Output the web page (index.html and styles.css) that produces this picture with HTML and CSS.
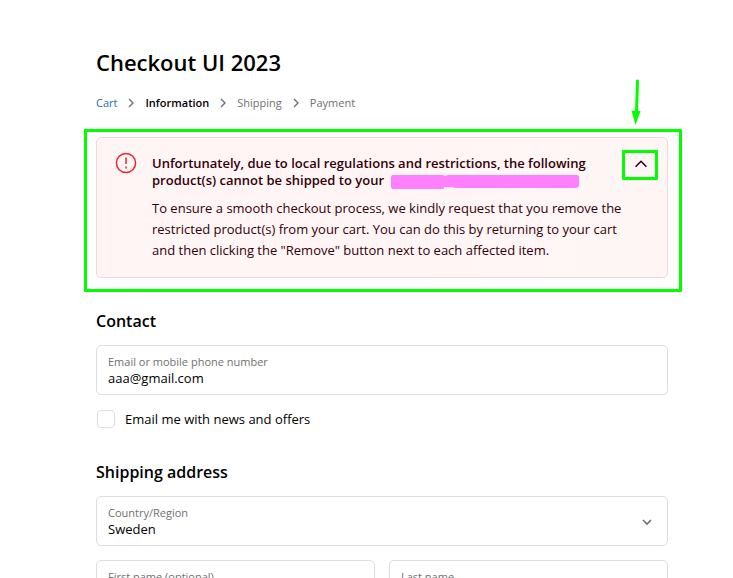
FILE: index.html
```
<!DOCTYPE html>
<html lang="en">
<head>
    <meta charset="UTF-8">
    <meta name="viewport" content="width=device-width, initial-scale=1.0">
    <title>Checkout UI 2023</title>
    <link rel="stylesheet" href="styles.css">
</head>
<body>
    <main class="checkout">
        <h1>Checkout UI 2023</h1>

        <nav aria-label="Breadcrumb">
            <ol class="breadcrumb">
                <li><a href="#cart">Cart</a></li>
                <li class="current" aria-current="step">
                    <svg class="separator" viewBox="0 0 10 10"><path d="M3 1l4 4-4 4"/></svg>
                    Information
                </li>
                <li>
                    <svg class="separator" viewBox="0 0 10 10"><path d="M3 1l4 4-4 4"/></svg>
                    Shipping
                </li>
                <li>
                    <svg class="separator" viewBox="0 0 10 10"><path d="M3 1l4 4-4 4"/></svg>
                    Payment
                </li>
            </ol>
        </nav>

        <div class="notice" role="alert">
            <svg class="notice-icon" viewBox="0 0 22 22">
                <circle cx="11" cy="11" r="9.6"/>
                <path d="M11 5.5v6.5M11 14.5v2"/>
            </svg>
            <h2 class="notice-title">
                Unfortunately, due to local regulations and restrictions, the following product(s) cannot be shipped to your
                <svg class="redacted" viewBox="0 0 188 14"><path d="M2 0H51Q53 0 54 1Q55 0 58 0H186Q188 0 188 2V10Q188 13 184 13H66Q62 13 61 12H53V13Q53 14 51 14H2Q0 14 0 12V2Q0 0 2 0Z"/></svg>
            </h2>
            <button class="notice-toggle" type="button" aria-label="Collapse">
                <svg viewBox="0 0 14 14"><path d="M1.6 9.7L7 4.3l5.4 5.4"/></svg>
                <span class="toggle-frame"></span>
                <svg class="arrow" viewBox="0 0 12 46">
                    <path class="arrow-line" d="M7.5 2L6.5 34"/>
                    <path class="arrow-head" d="M1.5 31.5L10.5 32L5.5 46Z"/>
                </svg>
            </button>
            <p class="notice-text">To ensure a smooth checkout process, we kindly request that you remove the restricted product(s) from your cart. You can do this by returning to your cart and then clicking the "Remove" button next to each affected item.</p>
            <span class="notice-frame"></span>
        </div>

        <form>
            <section>
                <h2>Contact</h2>
                <div class="field">
                    <label for="email">Email or mobile phone number</label>
                    <input type="text" id="email" value="aaa@gmail.com">
                </div>
                <div class="checkbox">
                    <input type="checkbox" id="news">
                    <label for="news">Email me with news and offers</label>
                </div>
            </section>

            <section>
                <h2>Shipping address</h2>
                <div class="field">
                    <label for="country">Country/Region</label>
                    <select id="country">
                        <option>Sweden</option>
                    </select>
                    <svg class="select-arrow" viewBox="0 0 10 10"><path d="M1 3l4 4 4-4"/></svg>
                </div>
                <div class="field-row">
                    <div class="field">
                        <label for="firstName">First name (optional)</label>
                        <input type="text" id="firstName">
                    </div>
                    <div class="field">
                        <label for="lastName">Last name</label>
                        <input type="text" id="lastName">
                    </div>
                </div>
            </section>
        </form>
    </main>
</body>
</html>
```
FILE: styles.css
```
* {
    margin: 0;
    padding: 0;
    box-sizing: border-box;
}

body {
    font-family: 'Segoe UI', 'Open Sans', 'Noto Sans', sans-serif;
    font-size: 13px;
    line-height: 21px;
    background: #fff;
    color: #000;
}

svg {
    fill: none;
    stroke: currentColor;
}

.checkout {
    padding: 46px 65px 0 96px;
}

h1 {
    font-size: 22px;
    line-height: 32px;
    font-weight: 600;
}

h2 {
    margin-bottom: 12px;
    font-size: 16px;
    line-height: 24px;
    font-weight: 600;
}

.breadcrumb {
    display: flex;
    margin: 16px 0 25px;
    list-style: none;
    font-size: 11px;
    line-height: 18px;
    color: #707070;
}

.breadcrumb li {
    display: flex;
    align-items: center;
}

.breadcrumb a {
    color: #2a6ba8;
    text-decoration: none;
}

.breadcrumb .current {
    color: #000;
    font-weight: 600;
}

.separator {
    width: 10px;
    height: 10px;
    margin: 0 9px;
    color: #707070;
    stroke-width: 1.4;
}

.notice {
    position: relative;
    display: grid;
    grid-template-columns: 22px 1fr 14px;
    column-gap: 15px;
    padding: 14px 19px 16px 18px;
    border: 1px solid #fad5d7;
    border-radius: 5px;
    background: linear-gradient(90deg, #fff5f5 50%, #fef6f5);
    color: #330007;
}

.notice-icon {
    width: 22px;
    height: 22px;
    color: #e8242c;
    stroke-width: 1.5;
}

.notice-title {
    margin: 3px 0 9px;
    font-size: 13px;
    line-height: 17px;
}

.redacted {
    width: 188px;
    height: 14px;
    margin-left: 4px;
    vertical-align: middle;
    fill: #ff80ff;
    stroke: none;
}

.notice-toggle {
    position: relative;
    width: 14px;
    height: 24px;
    border: none;
    background: none;
    color: #330007;
    cursor: pointer;
}

.notice-toggle svg {
    display: block;
    width: 14px;
    height: 14px;
    margin: auto;
    stroke-width: 1.6;
}

.notice-text {
    grid-column: 2 / 4;
    padding-right: 14px;
}

/* highlight frames and arrow lie over the notice */
.notice-frame,
.toggle-frame {
    position: absolute;
    border: 3px solid #00ff00;
    border-radius: 1px;
    pointer-events: none;
}

.notice-frame {
    inset: -9px -15px -15px -13px;
}

.toggle-frame {
    inset: -2px -10px -4px -12px;
}

.notice-toggle .arrow {
    position: absolute;
    left: -4px;
    bottom: 51px;
    width: 12px;
    height: 46px;
}

.arrow-line {
    stroke: #00ff00;
    stroke-width: 3;
    stroke-linecap: round;
}

.arrow-head {
    fill: #00ff00;
    stroke: none;
}

section {
    margin-top: 31px;
}

.field {
    position: relative;
    display: flex;
    flex-direction: column;
    padding: 8px 11px 7px;
    border: 1px solid #dedede;
    border-radius: 5px;
    background: #fff;
}

.field label {
    font-size: 11px;
    line-height: 16px;
    color: #707070;
}

.field input,
.field select {
    width: 100%;
    height: 17px;
    border: none;
    outline: none;
    background: none;
    color: #000;
    font-family: inherit;
    font-size: 13px;
    line-height: 17px;
    appearance: none;
}

.select-arrow {
    position: absolute;
    top: 20px;
    right: 15px;
    width: 10px;
    height: 10px;
    color: #707070;
    stroke-width: 1.6;
    pointer-events: none;
}

.field-row {
    display: grid;
    grid-template-columns: 1fr 1fr;
    gap: 14px;
    margin-top: 14px;
}

.checkbox {
    display: flex;
    align-items: center;
    gap: 10px;
    height: 20px;
    margin-top: 14px;
}

.checkbox input {
    width: 18px;
    height: 18px;
    margin-left: 1px;
    border: 1px solid #dedede;
    border-radius: 4px;
    appearance: none;
}

.checkbox input:checked {
    background: #1773b0;
}
```
